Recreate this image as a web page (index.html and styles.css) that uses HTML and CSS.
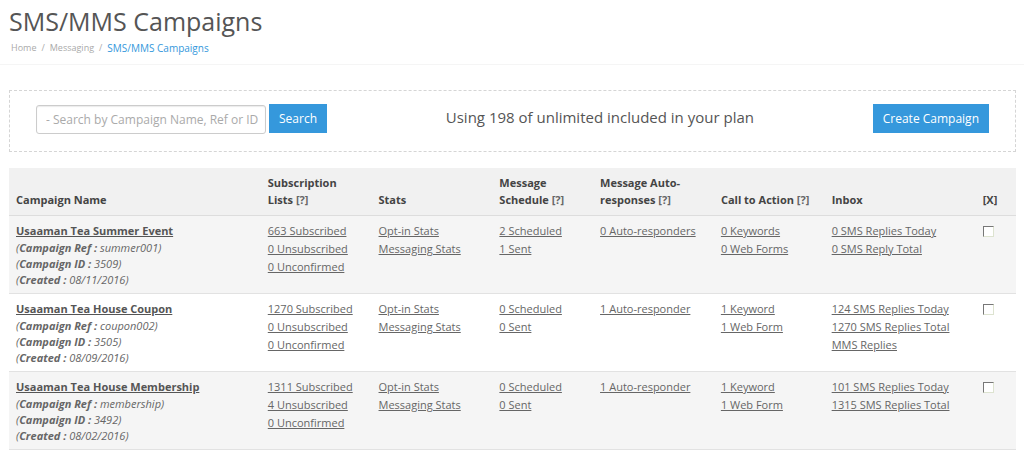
FILE: index.html
```html
<!DOCTYPE html>
<html lang="en">
<head>
    <meta charset="UTF-8">
    <meta name="viewport" content="width=device-width, initial-scale=1.0">
    <title>SMS/MMS Campaigns</title>
    <link rel="stylesheet" href="styles.css">
</head>
<body>
    <header class="page-header">
        <h1>SMS/MMS Campaigns</h1>
        <nav class="breadcrumb">
            <a href="#">Home</a>
            <span>/</span>
            <a href="#">Messaging</a>
            <span>/</span>
            <a href="#" class="active">SMS/MMS Campaigns</a>
        </nav>
    </header>

    <main>
        <div class="toolbar">
            <form class="search-form">
                <input type="text" class="search-input" aria-label="Search campaigns" placeholder="- Search by Campaign Name, Ref or ID">
                <button type="submit" class="btn">Search</button>
            </form>
            <p class="plan-usage">Using 198 of unlimited included in your plan</p>
            <button type="button" class="btn">Create Campaign</button>
        </div>

        <table class="campaigns">
            <colgroup>
                <col class="col-name">
                <col class="col-lists">
                <col class="col-stats">
                <col class="col-schedule">
                <col class="col-auto">
                <col class="col-action">
                <col class="col-inbox">
                <col class="col-check">
            </colgroup>
            <thead>
                <tr>
                    <th>Campaign Name</th>
                    <th>Subscription<br>Lists <span class="help">[?]</span></th>
                    <th>Stats</th>
                    <th>Message<br>Schedule <span class="help">[?]</span></th>
                    <th>Message Auto-<br>responses <span class="help">[?]</span></th>
                    <th>Call to Action <span class="help">[?]</span></th>
                    <th>Inbox</th>
                    <th>[X]</th>
                </tr>
            </thead>
            <tbody>
                <tr>
                    <td>
                        <a href="#" class="name">Usaaman Tea Summer Event</a>
                        <div class="meta">(<b>Campaign Ref :</b> summer001)</div>
                        <div class="meta">(<b>Campaign ID :</b> 3509)</div>
                        <div class="meta">(<b>Created :</b> 08/11/2016)</div>
                    </td>
                    <td><a href="#">663 Subscribed</a><br><a href="#">0 Unsubscribed</a><br><a href="#">0 Unconfirmed</a></td>
                    <td><a href="#">Opt-in Stats</a><br><a href="#">Messaging Stats</a></td>
                    <td><a href="#">2 Scheduled</a><br><a href="#">1 Sent</a></td>
                    <td><a href="#">0 Auto-responders</a></td>
                    <td><a href="#">0 Keywords</a><br><a href="#">0 Web Forms</a></td>
                    <td><a href="#">0 SMS Replies Today</a><br><a href="#">0 SMS Reply Total</a></td>
                    <td><input type="checkbox" class="check" aria-label="Select Usaaman Tea Summer Event"></td>
                </tr>
                <tr>
                    <td>
                        <a href="#" class="name">Usaaman Tea House Coupon</a>
                        <div class="meta">(<b>Campaign Ref :</b> coupon002)</div>
                        <div class="meta">(<b>Campaign ID :</b> 3505)</div>
                        <div class="meta">(<b>Created :</b> 08/09/2016)</div>
                    </td>
                    <td><a href="#">1270 Subscribed</a><br><a href="#">0 Unsubscribed</a><br><a href="#">0 Unconfirmed</a></td>
                    <td><a href="#">Opt-in Stats</a><br><a href="#">Messaging Stats</a></td>
                    <td><a href="#">0 Scheduled</a><br><a href="#">0 Sent</a></td>
                    <td><a href="#">1 Auto-responder</a></td>
                    <td><a href="#">1 Keyword</a><br><a href="#">1 Web Form</a></td>
                    <td><a href="#">124 SMS Replies Today</a><br><a href="#">1270 SMS Replies Total</a><br><a href="#">MMS Replies</a></td>
                    <td><input type="checkbox" class="check" aria-label="Select Usaaman Tea House Coupon"></td>
                </tr>
                <tr>
                    <td>
                        <a href="#" class="name">Usaaman Tea House Membership</a>
                        <div class="meta">(<b>Campaign Ref :</b> membership)</div>
                        <div class="meta">(<b>Campaign ID :</b> 3492)</div>
                        <div class="meta">(<b>Created :</b> 08/02/2016)</div>
                    </td>
                    <td><a href="#">1311 Subscribed</a><br><a href="#">4 Unsubscribed</a><br><a href="#">0 Unconfirmed</a></td>
                    <td><a href="#">Opt-in Stats</a><br><a href="#">Messaging Stats</a></td>
                    <td><a href="#">0 Scheduled</a><br><a href="#">0 Sent</a></td>
                    <td><a href="#">1 Auto-responder</a></td>
                    <td><a href="#">1 Keyword</a><br><a href="#">1 Web Form</a></td>
                    <td><a href="#">101 SMS Replies Today</a><br><a href="#">1315 SMS Replies Total</a></td>
                    <td><input type="checkbox" class="check" aria-label="Select Usaaman Tea House Membership"></td>
                </tr>
            </tbody>
        </table>
    </main>
</body>
</html>
```

FILE: styles.css
```css
* {
    box-sizing: border-box;
}
body {
    margin: 0;
    background: #fff;
    color: #666;
    font-family: "Open Sans", Arial, sans-serif;
    font-size: 11px;
    line-height: 18px;
}
.page-header {
    padding: 4px 9px 7px;
    border-bottom: 1px solid #f5f5f5;
}
h1 {
    margin: 0;
    color: #555;
    font-size: 25px;
    font-weight: 400;
    line-height: 35px;
}
.breadcrumb {
    display: flex;
    gap: 5px;
    padding: 0 2px;
    color: #aaa;
    font-size: 9px;
}
.breadcrumb a {
    color: #aaa;
    text-decoration: none;
}
.breadcrumb .active {
    color: #3598dc;
    font-size: 10px;
}
main {
    padding: 25px 8px 12px 9px;
}

/* Search bar */
.toolbar {
    display: flex;
    align-items: flex-start;
    justify-content: space-between;
    margin-bottom: 16px;
    padding: 13px 26px 17px;
    border: 1px dashed #d5d5d5;
}
.search-form {
    display: flex;
    gap: 3px;
}
.search-input {
    width: 230px;
    height: 29px;
    margin-top: 1px;
    padding: 0 4px 0 9px;
    border: 1px solid #ccc;
    border-radius: 3px;
    box-shadow: inset 0 1px 1px rgba(0, 0, 0, 0.08);
    color: #555;
    font-family: inherit;
    font-size: 12px;
}
.search-input::placeholder {
    color: #aaa;
}
.btn {
    height: 29px;
    padding: 0 10px;
    border: 0;
    background: #3598dc;
    color: #fff;
    font-family: inherit;
    font-size: 12px;
    cursor: pointer;
}
.plan-usage {
    margin: 0;
    color: #555;
    font-size: 15px;
    line-height: 26px;
}

/* Campaign list */
.campaigns {
    width: 100%;
    border-collapse: separate;
    border-spacing: 0;
    table-layout: fixed;
}
.col-name { width: 25%; }
.col-lists { width: 11%; }
.col-stats { width: 12%; }
.col-schedule { width: 10%; }
.col-auto { width: 12%; }
.col-action { width: 11%; }
.col-inbox { width: 15%; }
.col-check { width: 4%; }
.campaigns th {
    padding: 6px 7px 7px;
    border-bottom: 1px solid #ddd;
    background: #f1f1f1;
    color: #444;
    font-weight: 700;
    line-height: 17px;
    text-align: left;
    vertical-align: bottom;
    white-space: nowrap;
}
.campaigns .help {
    color: #666;
}
.campaigns td {
    padding: 6px 7px 5px;
    border-bottom: 1px solid #e2e2e2;
    vertical-align: top;
}
.campaigns tbody tr:nth-child(odd) {
    background: #f5f5f5;
}
.campaigns a {
    color: #666;
}
.campaigns .name {
    color: #555;
    font-weight: 700;
}
.meta {
    font-style: italic;
    line-height: 16px;
}
.check {
    display: block;
    width: 11px;
    height: 11px;
    margin: 4px 0 0;
    appearance: none;
    border: 1px solid;
    border-color: #777 #dde3d0 #dde3d0 #777;
    background: #fff;
}
.check:checked {
    background: #3598dc;
}
```
